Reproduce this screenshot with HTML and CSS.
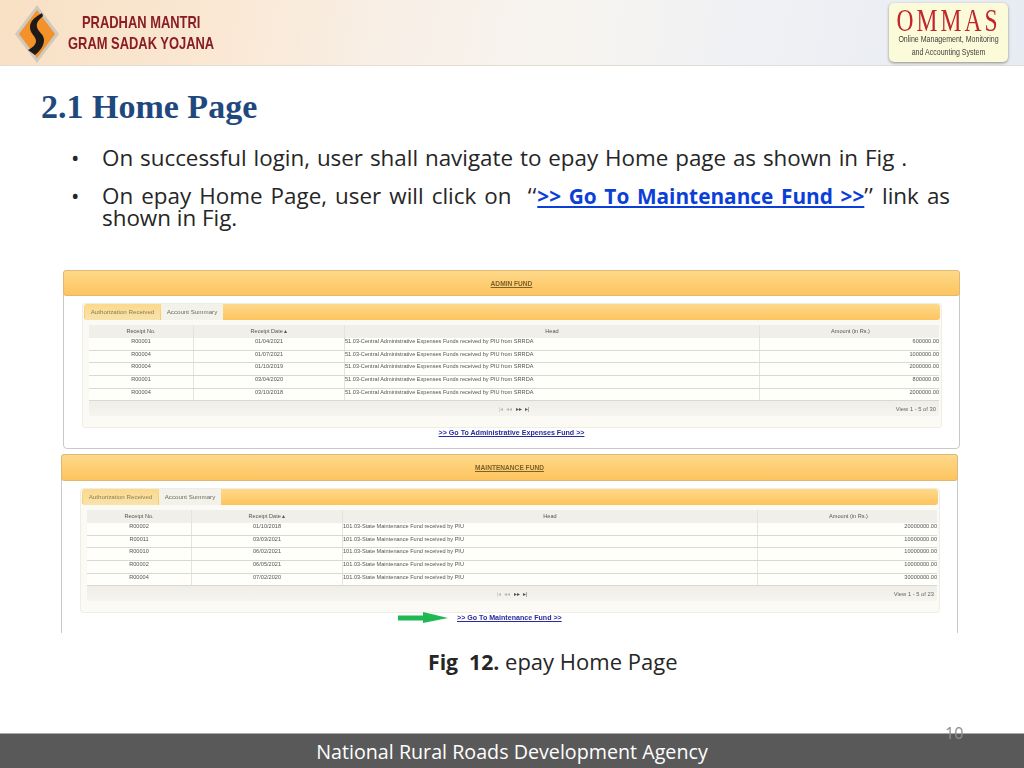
FILE: index.html
```html
<!DOCTYPE html>
<html lang="en">
<head>
<meta charset="utf-8">
<title>2.1 Home Page</title>
<link rel="stylesheet" href="styles.css">
</head>
<body>
<div class="slide">
  <header class="banner">
    <div class="brand">
      <svg class="brand-logo" width="44" height="58" viewBox="0 0 44 58">
        <polygon points="22,0 44,29 22,58 0,29" fill="#cfcabd"/>
        <polygon points="22,5 40,29 22,53 4,29" fill="#f3922a"/>
        <path d="M27 8 C22 11 15 15 15 22 C15 29 21 31 21 36 C21 40 17 43 13 45 L20 50 C25 46 29 41 29 35 C29 29 23 27 22 22 C21 17 25 14 28 11 Z" fill="#1d1a18"/>
      </svg>
      <div class="brand-name">
        <span class="brand-line brand-line-one">PRADHAN MANTRI</span>
        <span class="brand-line">GRAM SADAK YOJANA</span>
      </div>
    </div>
    <div class="ommas">
      <div class="ommas-title">OMMAS</div>
      <div class="ommas-sub">Online Management, Monitoring<br>and Accounting System</div>
    </div>
  </header>

  <main class="content">
    <h1 class="title">2.1 Home Page</h1>
    <ul class="bullets">
      <li class="bullet bullet-first">On successful login, user shall navigate to epay Home page as shown in Fig .</li>
      <li class="bullet bullet-second">On epay Home Page, user will click on &nbsp;<span class="quote">‘‘</span><a class="go-link" href="#">&gt;&gt; Go To Maintenance Fund &gt;&gt;</a><span class="quote">’’</span> link as shown in Fig.</li>
    </ul>

    <div class="shot">
      <section class="panel panel-admin">
        <div class="panel-head"><span class="panel-title">ADMIN FUND</span></div>
        <div class="tabs-box">
          <div class="tabs">
            <span class="tab tab-active">Authorization Received</span>
            <span class="tab">Account Summary</span>
          </div>
          <div class="grid-table">
            <div class="row row-head"><span>Receipt No.</span><span>Receipt Date ▴</span><span>Head</span><span>Amount (in Rs.)</span></div>
            <div class="row"><span>R00001</span><span>01/04/2021</span><span class="cell-left">51.03-Central Administrative Expenses Funds received by PIU from SRRDA</span><span class="cell-right">600000.00</span></div>
            <div class="row"><span>R00004</span><span>01/07/2021</span><span class="cell-left">51.03-Central Administrative Expenses Funds received by PIU from SRRDA</span><span class="cell-right">1000000.00</span></div>
            <div class="row"><span>R00004</span><span>01/10/2019</span><span class="cell-left">51.03-Central Administrative Expenses Funds received by PIU from SRRDA</span><span class="cell-right">2000000.00</span></div>
            <div class="row"><span>R00001</span><span>03/04/2020</span><span class="cell-left">51.03-Central Administrative Expenses Funds received by PIU from SRRDA</span><span class="cell-right">800000.00</span></div>
            <div class="row"><span>R00004</span><span>03/10/2018</span><span class="cell-left">51.03-Central Administrative Expenses Funds received by PIU from SRRDA</span><span class="cell-right">2000000.00</span></div>
            <div class="pager"><span class="pager-nav"><span class="pager-off">|◂ &nbsp;◂◂</span> &nbsp;▸▸ &nbsp;▸|</span><span class="pager-info">View 1 - 5 of 30</span></div>
          </div>
        </div>
        <div class="panel-link"><a class="small-link" href="#">&gt;&gt; Go To Administrative Expenses Fund &gt;&gt;</a></div>
      </section>

      <section class="panel panel-maint">
        <div class="panel-head"><span class="panel-title">MAINTENANCE FUND</span></div>
        <div class="tabs-box">
          <div class="tabs">
            <span class="tab tab-active">Authorization Received</span>
            <span class="tab">Account Summary</span>
          </div>
          <div class="grid-table">
            <div class="row row-head"><span>Receipt No.</span><span>Receipt Date ▴</span><span>Head</span><span>Amount (in Rs.)</span></div>
            <div class="row"><span>R00002</span><span>01/10/2018</span><span class="cell-left">101.03-State Maintenance Fund received by PIU</span><span class="cell-right">20000000.00</span></div>
            <div class="row"><span>R00011</span><span>03/03/2021</span><span class="cell-left">101.03-State Maintenance Fund received by PIU</span><span class="cell-right">10000000.00</span></div>
            <div class="row"><span>R00010</span><span>06/02/2021</span><span class="cell-left">101.03-State Maintenance Fund received by PIU</span><span class="cell-right">10000000.00</span></div>
            <div class="row"><span>R00002</span><span>06/05/2021</span><span class="cell-left">101.03-State Maintenance Fund received by PIU</span><span class="cell-right">10000000.00</span></div>
            <div class="row"><span>R00004</span><span>07/02/2020</span><span class="cell-left">101.03-State Maintenance Fund received by PIU</span><span class="cell-right">30000000.00</span></div>
            <div class="pager"><span class="pager-nav"><span class="pager-off">|◂ &nbsp;◂◂</span> &nbsp;▸▸ &nbsp;▸|</span><span class="pager-info">View 1 - 5 of 23</span></div>
          </div>
        </div>
        <div class="panel-link panel-link-arrow">
          <svg class="arrow" width="50" height="12" viewBox="0 0 50 12"><polygon points="0,3.5 25,3.5 25,0 50,6 25,11 25,8.5 0,8.5" fill="#1fb954"/></svg>
          <a class="small-link" href="#">&gt;&gt; Go To Maintenance Fund &gt;&gt;</a>
        </div>
      </section>
    </div>

    <p class="caption"><b class="caption-lead">Fig &nbsp;12.</b> epay Home Page</p>
  </main>

  <footer class="footer">
    National Rural Roads Development Agency
    <span class="page-number">10</span>
  </footer>
</div>
</body>
</html>
```
FILE: styles.css
```css
* { box-sizing: border-box; }
html, body { margin: 0; padding: 0; background: #fff; }
.slide {
  width: 1024px;
  height: 768px;
  display: flex;
  flex-direction: column;
  overflow: hidden;
  font-family: "Open Sans", "Noto Sans", sans-serif;
}
.banner {
  height: 66px;
  flex: none;
  display: flex;
  justify-content: space-between;
  align-items: flex-start;
  padding: 3px 0 0 15px;
  border-bottom: 1px solid #e3ddd3;
  background: linear-gradient(100deg, #f8e0c4 0%, #fae8d4 22%, #f8efe6 38%, #f7f4f0 55%, #f0f1f4 72%, #e7ebf3 100%);
}
.brand { display: flex; align-items: flex-start; }
.brand-logo { flex: none; margin-top: 2px; }
.brand-name {
  display: flex;
  flex-direction: column;
  margin: 9px 0 0 9px;
  font-family: "Liberation Sans", sans-serif;
  font-weight: 700;
  font-size: 17px;
  line-height: 21px;
  color: #8a1c24;
  white-space: nowrap;
}
.brand-line { display: block; transform: scaleX(0.76); transform-origin: left; }
.brand-line-one { margin-left: 14px; }
.ommas {
  width: 119px;
  height: 59px;
  margin: 0 16px 0 0;
  padding-top: 5px;
  border-radius: 5px;
  background: #fbfad9;
  box-shadow: 0 1px 3px #8d8d80;
  text-align: center;
  overflow: hidden;
}
.ommas-title {
  margin: 0 -20px;
  font-family: "Liberation Serif", serif;
  font-size: 31px;
  line-height: 25px;
  letter-spacing: 4px;
  color: #c0262c;
  white-space: nowrap;
  transform: scaleX(0.76);
}
.ommas-sub {
  margin: 0 -10px;
  font-family: "Liberation Sans", sans-serif;
  font-size: 8.2px;
  line-height: 13px;
  color: #3f3f3a;
  white-space: nowrap;
  transform: scaleX(0.86);
}
.content { flex: 1; position: relative; min-height: 0; }
.title {
  margin: 20px 0 0 41px;
  font-family: "Liberation Serif", serif;
  font-weight: 700;
  font-size: 34px;
  line-height: 42px;
  color: #1f497d;
}
.bullets { list-style: none; margin: 19px 74px 0 0; padding: 0 0 0 102px; }
.bullet {
  position: relative;
  font-size: 22.4px;
  line-height: 22px;
  color: #262626;
}
.bullet::before {
  content: "•";
  position: absolute;
  left: -31px;
  top: 0;
}
.bullet-first { white-space: nowrap; word-spacing: 1.05px; }
.bullet-second { margin-top: 16px; line-height: 21px; text-align: justify; }
.quote { letter-spacing: 1px; }
.go-link { font-size: 20.8px; color: #0b3fd8; font-weight: 700; }
.shot {
  width: 910px;
  height: 363px;
  margin: 42px 0 0 58px;
  overflow: hidden;
  filter: blur(0.35px);
}
.panel {
  width: 897px;
  background: #fff;
  border: 1px solid #c9c9c6;
  border-radius: 4px;
  font-family: "Liberation Sans", sans-serif;
  color: #555;
}
.panel-admin { height: 179px; margin-left: 5px; }
.panel-maint { height: 190px; margin: 5px 0 0 3px; border-bottom: 0; }
.panel-head {
  height: 26px;
  display: flex;
  align-items: center;
  justify-content: center;
  border: 1px solid #dfb878;
  border-radius: 3px;
  margin: -1px -1px 0;
  background: linear-gradient(#fed98a, #fdc45f);
}
.panel-maint .panel-head { height: 27px; }
.panel-title {
  font-size: 6.6px;
  font-weight: 700;
  color: #7d6227;
  text-decoration: underline;
}
.tabs-box {
  height: 125px;
  margin: 7px 17px 0 18px;
  padding: 0 1px;
  border: 1px solid #eeeee6;
  border-radius: 3px;
  background: #fbfaf5;
}
.tabs {
  height: 16px;
  display: flex;
  align-items: flex-end;
  padding-left: 1px;
  border-radius: 3px;
  background: linear-gradient(#fed98a, #fdc45f);
}
.tab {
  height: 16px;
  padding-bottom: 1px;
  display: flex;
  align-items: center;
  justify-content: center;
  font-size: 6.2px;
  color: #6c6c60;
  white-space: nowrap;
}
.tab-active { width: 75px; color: #8d7d50; background: linear-gradient(#fbd98c, #f8e3ac); border-radius: 3px 3px 0 0; }
.tab:not(.tab-active) { width: 62px; margin-left: 1px; background: #f3f2ea; }
.grid-table { margin: 5px 1px 0 5px; border-radius: 0 0 3px 3px; }
.row {
  display: grid;
  grid-template-columns: 105px 151px 415px 181px;
  height: 12.65px;
  font-size: 5.6px;
  line-height: 7px;
  text-align: center;
  color: #555;
  border-bottom: 1px solid #d9d9d0;
  background: #fefefb;
  white-space: nowrap;
}
.row > span { border-right: 1px solid #e4e4da; padding: 0 2px; overflow: hidden; }
.row > span:last-child { border-right: 0; }
.row-head { height: 13px; line-height: 12px; background: #f0efe9; border-bottom: 0; }
.row > .cell-left { text-align: left; padding-left: 0; }
.row > .cell-right { text-align: right; }
.pager {
  height: 15px;
  display: grid;
  grid-template-columns: 1fr auto 1fr;
  align-items: center;
  font-size: 5.8px;
  color: #666;
  background: linear-gradient(#efeee8, #f5f4ee);
  border-radius: 0 0 3px 3px;
}
.pager-nav { grid-column: 2; color: #555; font-size: 5.5px; white-space: nowrap; }
.pager-off { color: #bbb; }
.pager-info { grid-column: 3; text-align: right; padding-right: 3px; }
.panel-link {
  display: flex;
  justify-content: center;
  margin-top: 1px;
  font-size: 7.1px;
  font-weight: 700;
}
.panel-link-arrow { margin: -2px 0 0 336px; justify-content: flex-start; align-items: center; gap: 9px; height: 14px; }
.small-link { color: #2a2a9c; white-space: nowrap; }
.caption {
  margin: 16px 0 0 428px;
  font-size: 22px;
  line-height: 24px;
  color: #262626;
  white-space: nowrap;
}
.caption-lead { font-size: 21.2px; }
.footer {
  position: relative;
  height: 35px;
  flex: none;
  background: #595959;
  border-top: 1px solid #a8a8a8;
  color: #fff;
  font-size: 19.7px;
  line-height: 36px;
  text-align: center;
}
.page-number {
  position: absolute;
  left: 945px;
  top: -12px;
  font-size: 16px;
  line-height: 22px;
  color: #8f8f8f;
}
```
